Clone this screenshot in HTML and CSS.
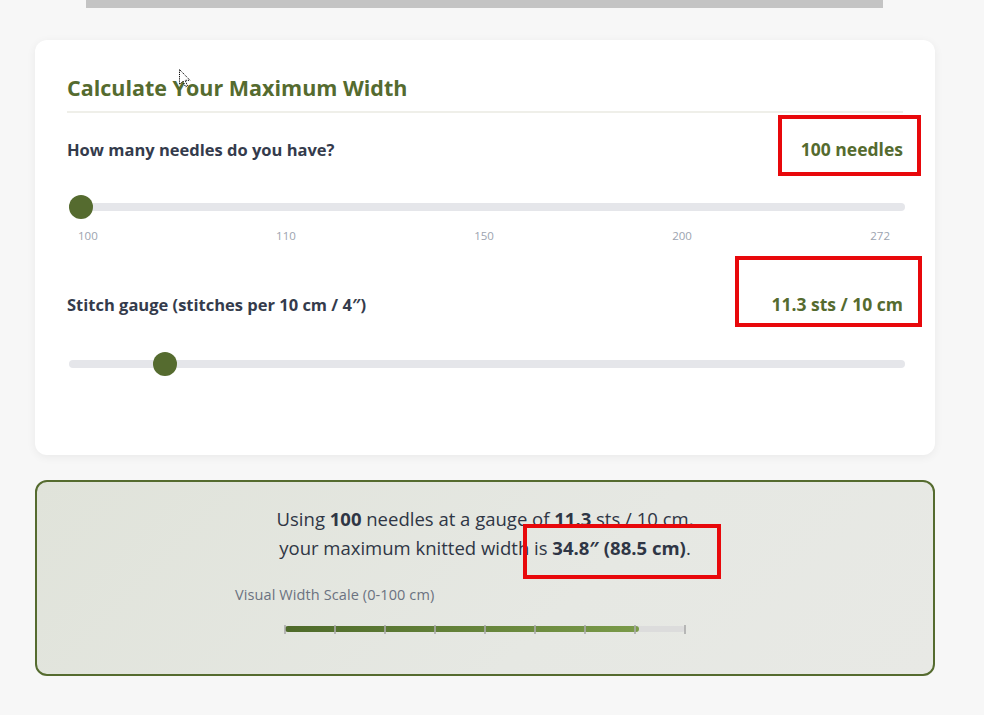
FILE: index.html
```html
<!DOCTYPE html>
<html lang="en">
<head>
<meta charset="utf-8">
<title>Maximum Width Calculator</title>
<link rel="stylesheet" href="styles.css">
</head>
<body>
<div class="page">
  <div class="topstrip"></div>

  <section class="card">
    <h2 class="card-title">Calculate Your Maximum Width</h2>

    <div class="field-row">
      <label class="field-label" for="needles">How many needles do you have?</label>
      <span class="field-value">100 needles</span>
    </div>
    <input class="slider" id="needles" type="range" min="100" max="272" value="100">
    <div class="ticks">
      <span>100</span><span>110</span><span>150</span><span>200</span><span>272</span>
    </div>

    <div class="field-row field-row-2">
      <label class="field-label" for="gauge">Stitch gauge (stitches per 10 cm / 4″)</label>
      <span class="field-value">11.3 sts / 10 cm</span>
    </div>
    <input class="slider" id="gauge" type="range" min="8" max="40" step="0.1" value="11.3">
  </section>

  <section class="result">
    <p class="result-text">Using <strong>100</strong> needles at a gauge of <strong>11.3</strong> sts / 10 cm,<br>your maximum knitted width is <strong>34.8″ (88.5 cm)</strong>.</p>
    <div class="scale">
      <div class="scale-label">Visual Width Scale (0-100 cm)</div>
      <div class="scale-bar">
        <div class="scale-fill" style="width: 88.5%"></div>
        <div class="scale-ticks">
          <i></i><i></i><i></i><i></i><i></i><i></i><i></i><i></i><i></i>
        </div>
      </div>
    </div>
  </section>

  <div class="mark mark-1"></div>
  <div class="mark mark-2"></div>
  <div class="mark mark-3"></div>

  <svg class="cursor" width="12" height="19" viewBox="0 0 12 19">
    <path d="M0.5 0.5 L0.5 15.5 L4 12 L6.5 17.8 L8.6 16.9 L6.1 11.3 L11 11.3 Z" fill="#fff" stroke="#000" stroke-width="1" stroke-dasharray="1.2 1"/>
  </svg>
</div>
</body>
</html>
```

FILE: styles.css
```css
* { box-sizing: border-box; }

html, body {
  margin: 0;
  padding: 0;
  background: #f7f7f7;
}

body {
  font-family: "Open Sans", "DejaVu Sans", sans-serif;
  color: #2f3645;
}

.page {
  position: relative;
  width: 984px;
  height: 715px;
  overflow: hidden;
}

.topstrip {
  margin-left: 86px;
  width: 797px;
  height: 8px;
  background: #c4c4c4;
}

.card {
  margin: 32px 0 0 35px;
  width: 900px;
  height: 415px;
  background: #fff;
  border-radius: 12px;
  box-shadow: 0 2px 10px rgba(0, 0, 0, 0.06);
  padding: 33px 32px 0 32px;
}

.card-title {
  margin: 0;
  font-size: 21.5px;
  line-height: 30px;
  font-weight: 700;
  color: #556b2f;
  padding-bottom: 8px;
  border-bottom: 2px solid #efefe9;
}

.field-row {
  display: flex;
  justify-content: space-between;
  align-items: center;
  margin-top: 22px;
  height: 28px;
}
.field-row-2 {
  margin-top: 47px;
}

.field-label {
  font-size: 16.5px;
  font-weight: 700;
  color: #343b4c;
}

.field-value {
  font-size: 17.5px;
  font-weight: 700;
  color: #556b2f;
}

.slider {
  -webkit-appearance: none;
  appearance: none;
  display: block;
  width: 836px;
  margin: 32px 0 0 2px;
  height: 24px;
  background: transparent;
  outline: none;
}
.slider::-webkit-slider-runnable-track {
  height: 8px;
  background: #e5e6ea;
  border-radius: 4px;
}
.slider::-webkit-slider-thumb {
  -webkit-appearance: none;
  appearance: none;
  width: 24px;
  height: 24px;
  margin-top: -8px;
  border-radius: 50%;
  background: #556b2f;
  border: none;
}

.field-row-2 + .slider {
  margin-top: 34px;
}

.ticks {
  display: flex;
  justify-content: space-between;
  padding: 0 13px 0 11px;
  margin-top: 10px;
  font-size: 11.5px;
  line-height: 14px;
  color: #9ca3af;
}

.result {
  margin: 25px 0 0 35px;
  width: 900px;
  height: 196px;
  border: 2px solid #556b2f;
  border-radius: 12px;
  background: linear-gradient(135deg, #e0e3da 0%, #e6e8e3 60%, #e8e9e5 100%);
  padding: 22px 0 0 0;
}

.result-text {
  margin: 0;
  text-align: center;
  font-size: 18.5px;
  line-height: 29px;
  color: #2f3645;
}
.result-text strong {
  font-weight: 700;
}

.scale {
  width: 500px;
  margin: 24px auto 0 auto;
}
.scale-label {
  font-size: 14.5px;
  line-height: 18px;
  color: #6b7280;
  letter-spacing: 0.1px;
}
.scale-bar {
  position: relative;
  width: 400px;
  height: 6px;
  margin: 22px auto 0 auto;
  background: #dcdcdc;
  border-radius: 3px;
}
.scale-fill {
  height: 6px;
  border-radius: 3px;
  background: linear-gradient(90deg, #4e6a2a 0%, #7a9a49 100%);
}
.scale-ticks {
  position: absolute;
  left: -1px;
  right: -1px;
  top: -1px;
  height: 8px;
  display: flex;
  justify-content: space-between;
}
.scale-ticks i {
  display: block;
  width: 2px;
  height: 9px;
  background: rgba(170, 170, 170, 0.8);
}

.mark {
  position: absolute;
  border: 4px solid #e8080b;
}
.mark-1 { left: 778px; top: 115px; width: 143px; height: 61px; }
.mark-2 { left: 735px; top: 256px; width: 187px; height: 71px; }
.mark-3 { left: 523px; top: 524px; width: 198px; height: 55px; }

.cursor {
  position: absolute;
  left: 179px;
  top: 69px;
}
```
